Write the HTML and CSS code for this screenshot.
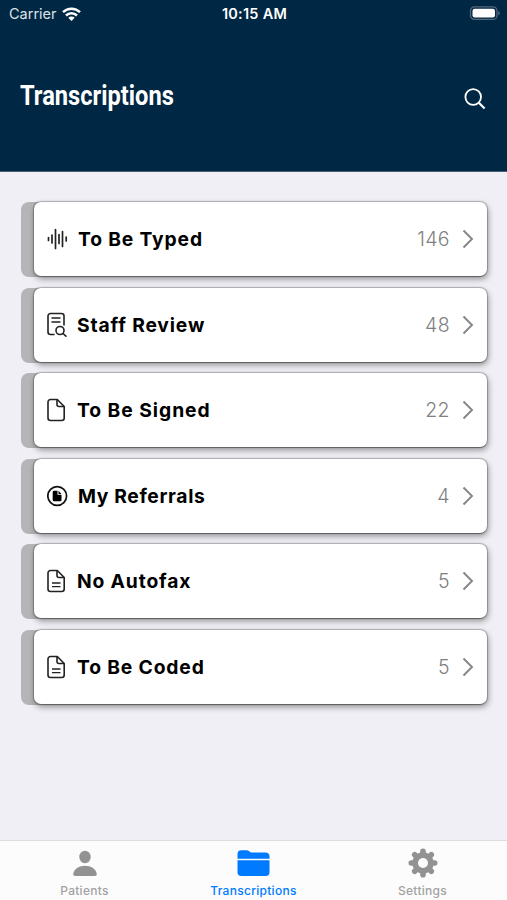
FILE: index.html
```
<!DOCTYPE html>
<html lang="en">
<head>
  <meta charset="UTF-8" />
  <meta name="viewport" content="width=device-width, initial-scale=1.0" />
  <title>Transcriptions</title>
  <link rel="stylesheet" href="styles.css">
</head>
<body>
  <div class="app">
    <header>
      <div class="status-bar">
        <div class="carrier">
          <span>Carrier</span>
          <svg width="19" height="14" viewBox="0 0 19 14" fill="none" stroke="#fff" stroke-width="2.5">
            <path d="M1 5.2a12.2 12.2 0 0 1 17 0M4 8.5a7.8 7.8 0 0 1 11 0" />
            <path d="M6.3 10.7a4.6 4.6 0 0 1 6.4 0L9.5 14z" fill="#fff" stroke="none" />
          </svg>
        </div>
        <div class="time">10:15 AM</div>
        <div class="battery">
          <svg width="31" height="15" viewBox="0 0 31 15">
            <rect x="1.500" y="0.800" width="26.500" height="12.600" rx="4" fill="none" stroke="#52697c" stroke-width="1.300" />
            <rect x="3.500" y="2.800" width="22.500" height="8.600" rx="2.200" fill="#fff" />
            <path d="M29.300 5v4.600q1.500-.8 1.500-2.300T29.300 5z" fill="#52697c" />
          </svg>
        </div>
      </div>
      <div class="title-bar">
        <h1>Transcriptions</h1>
        <svg class="search" width="22" height="22" viewBox="0 0 22 22" fill="none" stroke="#fff" stroke-width="1.8">
          <circle cx="9.2" cy="9" r="7.8" />
          <path d="M14.6 14.5l6 6" stroke-width="2.2" />
        </svg>
      </div>
    </header>

    <main class="list">
      <div class="stack">
        <a class="card">
          <svg class="icon wide" width="22" height="24" viewBox="0 0 22 24" stroke="#222" stroke-width="1.700" stroke-linecap="round">
            <path d="M1.5 10.5v3M5 8v8M8.500 2.500v19M12 7.500v9M15.500 4.500v15M19.200 10v4" />
          </svg>
          <span class="label typed">To Be Typed</span>
          <span class="count">146</span>
          <svg class="arrow" width="12" height="20" viewBox="0 0 12 20"><path d="M1.5 1.5L10 10l-8.500 8.500" /></svg>
        </a>
      </div>
      <div class="stack">
        <a class="card">
          <svg class="icon" width="20" height="26" viewBox="0 0 20 26" fill="none" stroke="#222" stroke-width="1.6" stroke-linecap="round">
            <path d="M7 22.500H3.500a2.500 2.500 0 0 1-2.500-2.500V4a2.500 2.500 0 0 1 2.500-2.500h11a2.500 2.500 0 0 1 2.500 2.500v9" />
            <path d="M5 6h8M5 10h8" stroke-width="1.4" />
            <circle cx="13" cy="18.500" r="4" />
            <path d="M16 21.500l2.900 2.700" />
          </svg>
          <span class="label review">Staff Review</span>
          <span class="count">48</span>
          <svg class="arrow" width="12" height="20" viewBox="0 0 12 20"><path d="M1.5 1.5L10 10l-8.500 8.500" /></svg>
        </a>
      </div>
      <div class="stack">
        <a class="card">
          <svg class="icon" width="20" height="24" viewBox="0 0 20 24" fill="none" stroke="#222" stroke-width="1.6" stroke-linejoin="round">
            <path d="M3.500 1.500h6.800L17.200 8.500v11.500a2.500 2.500 0 0 1-2.500 2.500H3.500A2.500 2.500 0 0 1 1 20V4a2.500 2.500 0 0 1 2.500-2.500z" />
            <path d="M10 1.500v5q0 2 2 2h5.200" />
          </svg>
          <span class="label signed">To Be Signed</span>
          <span class="count">22</span>
          <svg class="arrow" width="12" height="20" viewBox="0 0 12 20"><path d="M1.5 1.5L10 10l-8.500 8.500" /></svg>
        </a>
      </div>
      <div class="stack">
        <a class="card">
          <svg class="icon wide" width="22" height="24" viewBox="0 0 22 24">
            <circle cx="10.200" cy="12" r="9.400" fill="none" stroke="#111" stroke-width="1.700" />
            <path d="M7 6.800h3.500v4h4V16q0 1.300-1.300 1.300H7q-1.300 0-1.300-1.300V8.100Q5.700 6.800 7 6.800zM11.500 6.800l3 3.100h-3z" fill="#000" />
          </svg>
          <span class="label referrals">My Referrals</span>
          <span class="count">4</span>
          <svg class="arrow" width="12" height="20" viewBox="0 0 12 20"><path d="M1.5 1.5L10 10l-8.500 8.500" /></svg>
        </a>
      </div>
      <div class="stack">
        <a class="card">
          <svg class="icon" width="20" height="24" viewBox="0 0 20 24" fill="none" stroke="#222" stroke-width="1.6" stroke-linejoin="round">
            <path d="M3.500 1.500h6.800L17.200 8.500v11.500a2.500 2.500 0 0 1-2.500 2.500H3.500A2.500 2.500 0 0 1 1 20V4a2.500 2.500 0 0 1 2.500-2.500z" />
            <path d="M10 1.500v5q0 2 2 2h5.200" />
            <path d="M5 14h8.500M5 17.700h8.500" stroke-width="1.300" />
          </svg>
          <span class="label autofax">No Autofax</span>
          <span class="count">5</span>
          <svg class="arrow" width="12" height="20" viewBox="0 0 12 20"><path d="M1.5 1.5L10 10l-8.500 8.500" /></svg>
        </a>
      </div>
      <div class="stack">
        <a class="card">
          <svg class="icon" width="20" height="24" viewBox="0 0 20 24" fill="none" stroke="#222" stroke-width="1.6" stroke-linejoin="round">
            <path d="M3.500 1.500h6.800L17.200 8.500v11.500a2.500 2.500 0 0 1-2.500 2.500H3.500A2.500 2.500 0 0 1 1 20V4a2.500 2.500 0 0 1 2.500-2.500z" />
            <path d="M10 1.500v5q0 2 2 2h5.200" />
            <path d="M5 14h8.500M5 17.700h8.500" stroke-width="1.300" />
          </svg>
          <span class="label coded">To Be Coded</span>
          <span class="count">5</span>
          <svg class="arrow" width="12" height="20" viewBox="0 0 12 20"><path d="M1.5 1.5L10 10l-8.500 8.500" /></svg>
        </a>
      </div>
    </main>

    <nav class="tab-bar">
      <a class="tab">
        <svg width="34" height="32" viewBox="0 0 34 32" fill="#929292">
          <ellipse cx="17" cy="10" rx="5.700" ry="6.200" />
          <path d="M7.500 29C5.500 29 5 27.800 5.300 26.500 6.500 21.800 11 18.800 17 18.800s10.500 3 11.700 7.700c.3 1.300-.2 2.500-2.200 2.500z" />
        </svg>
        <span>Patients</span>
      </a>
      <a class="tab active">
        <svg width="34" height="32" viewBox="0 0 34 32" fill="#007aff">
          <path d="M.5 11.700V7q0-3.800 3.800-3.800h5q1.700 0 3 1.100l1.500 1.200h14.500q4.200 0 4.200 4v2.200z" />
          <path d="M.5 13.200h32v12q0 3.800-3.800 3.800H4.300Q.5 29 .5 25.200z" />
        </svg>
        <span>Transcriptions</span>
      </a>
      <a class="tab">
        <svg width="34" height="32" viewBox="0 0 34 32">
          <g stroke="#929292" stroke-width="5.600" stroke-linecap="round">
            <path d="M17 4.300v23.400M5.300 16h23.400M8.700 7.700l16.600 16.600M25.300 7.700L8.700 24.300" />
          </g>
          <circle cx="17" cy="16" r="10.700" fill="#929292" />
          <circle cx="17" cy="16" r="5" fill="#fcfcfd" />
        </svg>
        <span>Settings</span>
      </a>
    </nav>
  </div>
</body>
</html>
```
FILE: styles.css
```
* {
  box-sizing: border-box;
}
body {
  margin: 0;
  font-family: Inter, "Liberation Sans", sans-serif;
  background-color: #f0eff5;
  color: #000;
}
.app {
  height: 900px;
  display: flex;
  flex-direction: column;
}
header {
  height: 172px;
  background-color: #002743;
  border-bottom: 1px solid #476078;
  color: white;
}
.status-bar {
  height: 27px;
  padding: 0 7px 0 9px;
  display: flex;
  align-items: center;
  font-size: 14.5px;
}
.carrier, .battery {
  flex: 1;
  display: flex;
  align-items: center;
}
.carrier {
  gap: 6px;
  color: #dce3e8;
}
.carrier svg {
  margin-left: -1px;
}
.battery {
  justify-content: flex-end;
}
.time {
  font-weight: 600;
  letter-spacing: 0.25px;
}
.title-bar {
  display: flex;
  justify-content: space-between;
  align-items: center;
  padding: 51px 21px 0 20px;
}
h1 {
  margin: 0;
  font-family: Roboto, sans-serif;
  font-size: 28.5px;
  line-height: 36px;
  font-weight: 700;
  transform: scaleX(0.83);
  transform-origin: left;
}
.search {
  margin-top: 5px;
}
.list {
  flex: 1;
  padding: 30px 20px 0 21px;
  display: flex;
  flex-direction: column;
  gap: 10.5px;
}
.stack {
  height: 75px;
  padding-left: 13px;
  background-color: #b5b5b7;
  border-radius: 8px;
}
.card {
  height: 74px;
  display: flex;
  align-items: center;
  padding: 0 13px;
  background-color: white;
  border-radius: 7px;
  box-shadow: 0 0 1px 1px rgba(0, 0, 0, 0.24), 1px 3px 6px rgba(0, 0, 0, 0.4);
}
.icon {
  margin-right: 10px;
}
.wide {
  margin-right: 9px;
}
.label {
  flex: 1;
  font-size: 19.3px;
  font-weight: 700;
  letter-spacing: 0.84px;
  white-space: nowrap;
}
.signed {
  letter-spacing: 0.95px;
}
.referrals {
  letter-spacing: 0.64px;
}
.count {
  font-size: 19.5px;
  font-weight: 300;
  letter-spacing: 0.4px;
  color: #808080;
  margin-right: 12px;
}
.arrow {
  fill: none;
  stroke: #858585;
  stroke-width: 1.9;
}
.tab-bar {
  height: 60px;
  display: flex;
  background-color: #fcfcfd;
  border-top: 1px solid #dededf;
}
.tab {
  flex: 1;
  display: flex;
  flex-direction: column;
  align-items: center;
  padding-top: 6px;
  font-size: 12px;
  line-height: 15px;
  font-weight: 500;
  letter-spacing: 0.28px;
  color: #a2a2a2;
}
.tab span {
  margin-top: 4px;
}
.tab.active {
  color: #007aff;
}
```
